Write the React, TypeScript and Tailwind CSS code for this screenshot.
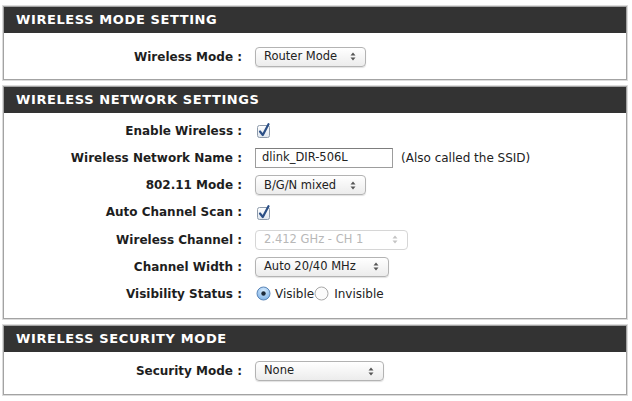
import React from "react";

const font = { fontFamily: '"DejaVu Sans", Verdana, sans-serif' };

function Arrows({ faded = false }: { faded?: boolean }) {
	const c = faded ? "#c4c4c4" : "#555";
	return (
		<svg width="6" height="9" viewBox="0 0 6 9" className="shrink-0">
			<path d="M3 0.5 L5.5 3.5 L0.5 3.5 Z" fill={c} />
			<path d="M3 8.5 L5.5 5.5 L0.5 5.5 Z" fill={c} />
		</svg>
	);
}

function Select({
	value,
	width,
	disabled = false,
}: {
	value: string;
	width: string;
	disabled?: boolean;
}) {
	return (
		<div
			className={`${width} h-[20px] flex items-center justify-between pl-[8px] pr-[9px] rounded-[4px] border ${
				disabled
					? "border-[#d6d6d6] text-[#b8b8b8] bg-white"
					: "border-[#b3b3b3] text-[#222] bg-gradient-to-b from-white to-[#ececec] shadow-[0_1px_1px_rgba(0,0,0,0.12)]"
			} text-[11.5px]`}
		>
			<span>{value}</span>
			<Arrows faded={disabled} />
		</div>
	);
}

function Checkbox() {
	return (
		<svg width="14" height="15" viewBox="0 0 14 15" className="ml-[2px]">
			<defs>
				<linearGradient id="cb" x1="0" y1="0" x2="0" y2="1">
					<stop offset="0" stopColor="#ffffff" />
					<stop offset="1" stopColor="#dfe6ee" />
				</linearGradient>
			</defs>
			<rect x="0.5" y="2.5" width="12" height="12" rx="2" fill="url(#cb)" stroke="#8e9bab" />
			<path d="M3 8.5 L5.8 12 L11.5 1.2" fill="none" stroke="#2b4f86" strokeWidth="2.2" strokeLinecap="round" strokeLinejoin="round" />
		</svg>
	);
}

function Radio({ on }: { on: boolean }) {
	return (
		<svg width="15" height="15" viewBox="0 0 15 15" className="shrink-0">
			<defs>
				<radialGradient id="rb" cx="0.5" cy="0.3" r="0.7">
					<stop offset="0" stopColor="#d7ecff" />
					<stop offset="1" stopColor="#7fb2e6" />
				</radialGradient>
			</defs>
			<circle cx="7.5" cy="7.5" r="6.5" fill={on ? "url(#rb)" : "#fbfbfb"} stroke={on ? "#5b86b8" : "#a9a9a9"} />
			{on && <circle cx="7.5" cy="7.5" r="2.2" fill="#1d2a3a" />}
		</svg>
	);
}

function Row({ label, children }: { label: string; children: React.ReactNode }) {
	return (
		<div className="flex items-center h-[27.2px]">
			<div className="w-[240px] shrink-0 text-right font-bold text-[12px] text-[#1e1e1e] pr-[2px]">
				{label}
			</div>
			<div className="ml-[11px] flex items-center text-[12px] text-[#222]">{children}</div>
		</div>
	);
}

function Section({
	title,
	children,
	body,
}: {
	title: string;
	children: React.ReactNode;
	body: string;
}) {
	return (
		<div className="border border-[#a3a3a3] shadow-[0_0_0_1px_#dcdcdc]">
			<div className="h-[26px] bg-[#333333] text-white font-bold text-[13px] tracking-[0.6px] pl-[12px] flex items-center">
				{title}
			</div>
			<div className={body}>{children}</div>
		</div>
	);
}

export default function App() {
	return (
		<div className="w-[632px] h-[401px] bg-white pl-[3px] pr-[5px] pt-[6px] flex flex-col gap-[6px]" style={font}>
			<Section title="WIRELESS MODE SETTING" body="pt-[10px] pb-[9px]">
				<Row label="Wireless Mode :">
					<Select value="Router Mode" width="w-[111px]" />
				</Row>
			</Section>

			<Section title="WIRELESS NETWORK SETTINGS" body="pt-[4px] pb-[10px]">
				<Row label="Enable Wireless :">
					<Checkbox />
				</Row>
				<Row label="Wireless Network Name :">
					<div className="w-[138px] h-[20px] border border-[#9d9d9d] border-t-[#7d7d7d] bg-white pl-[6px] flex items-center text-[11.5px] text-[#222]">
						dlink_DIR-506L
					</div>
					<span className="ml-[8px]">(Also called the SSID)</span>
				</Row>
				<Row label="802.11 Mode :">
					<Select value="B/G/N mixed" width="w-[111px]" />
				</Row>
				<Row label="Auto Channel Scan :">
					<Checkbox />
				</Row>
				<Row label="Wireless Channel :">
					<Select value="2.412 GHz - CH 1" width="w-[153px]" disabled />
				</Row>
				<Row label="Channel Width :">
					<Select value="Auto 20/40 MHz" width="w-[134px]" />
				</Row>
				<Row label="Visibility Status :">
					<div className="ml-[1px] flex items-center">
						<Radio on />
						<span className="ml-[4px]">Visible</span>
						<Radio on={false} />
						<span className="ml-[5px]">Invisible</span>
					</div>
				</Row>
			</Section>

			<Section title="WIRELESS SECURITY MODE" body="pt-[6px] pb-[9px]">
				<Row label="Security Mode :">
					<Select value="None" width="w-[129px]" />
				</Row>
			</Section>
		</div>
	);
}
